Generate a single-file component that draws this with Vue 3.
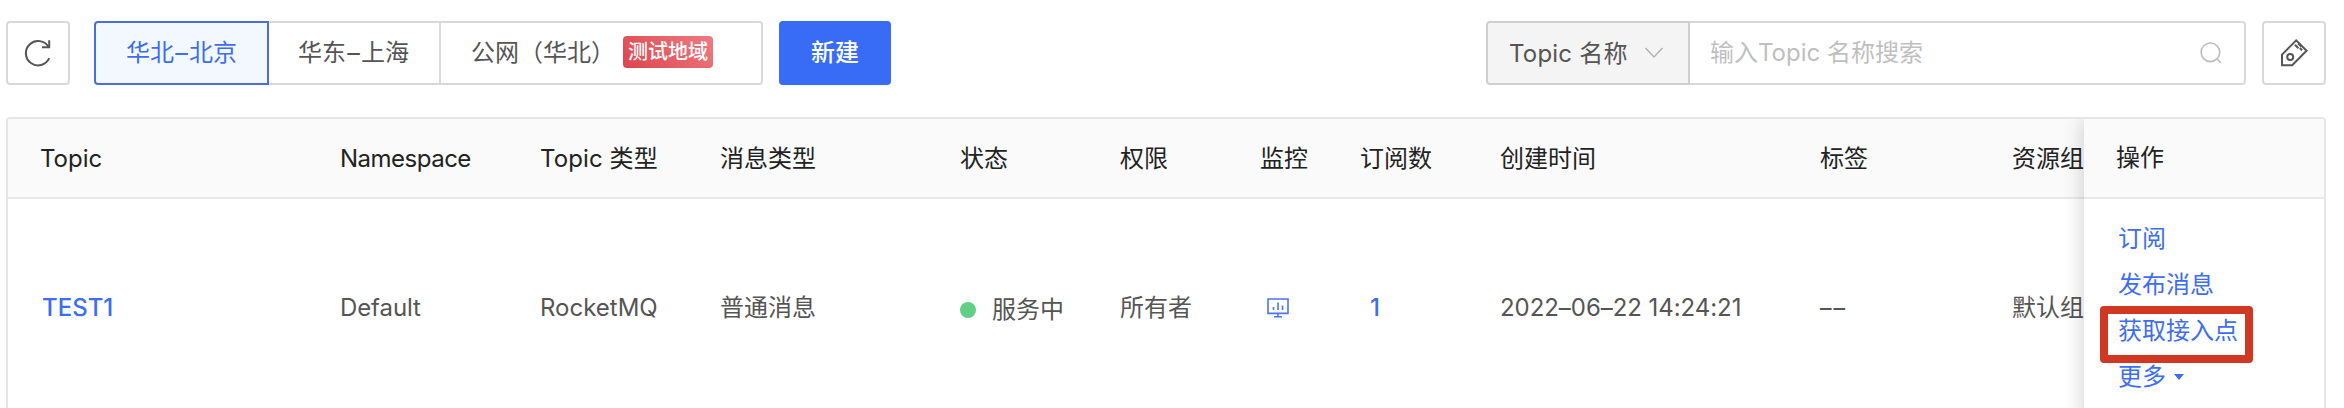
<script setup>
const columns = [
  { key: 'topic', label: 'Topic' },
  { key: 'ns', label: 'Namespace' },
  { key: 'type', label: 'Topic 类型' },
  { key: 'msg', label: '消息类型' },
  { key: 'status', label: '状态' },
  { key: 'perm', label: '权限' },
  { key: 'monitor', label: '监控' },
  { key: 'subs', label: '订阅数' },
  { key: 'created', label: '创建时间' },
  { key: 'tags', label: '标签' },
  { key: 'group', label: '资源组' },
]
</script>

<template>
  <div class="page">
    <div class="toolbar">
      <button class="icon-btn">
        <svg width="28" height="28" viewBox="0 0 28 28" fill="none" stroke="#555" stroke-width="2">
          <path d="M25.2 19.2A12.2 12.2 0 1 1 24.6 8" />
          <path d="M25.2 1.2V8.2H18" />
        </svg>
      </button>
      <div class="regions">
        <div class="region active">华北<span class="wide-dash">–</span>北京</div>
        <div class="region east">华东<span class="wide-dash">–</span>上海</div>
        <div class="region public">公网（华北）<span class="tag">测试地域</span></div>
      </div>
      <button class="create">新建</button>
      <div class="search">
        <div class="select">
          <span class="sel-text">Topic 名称</span>
          <svg width="20" height="12" viewBox="0 0 20 12" fill="none" stroke="#b2b2b2" stroke-width="1.5"><path d="M1.5 1L10 10L18.5 1" /></svg>
        </div>
        <div class="input">
          <span>输入Topic 名称搜索</span>
          <svg width="22" height="22" viewBox="0 0 22 22" fill="none" stroke="#bdbdbd" stroke-width="1.6">
            <circle cx="10.4" cy="10.3" r="9.3" /><path d="M16.8 16.8L20.8 20.8" />
          </svg>
        </div>
      </div>
      <button class="icon-btn">
        <svg width="28" height="28" viewBox="0 0 28 28" fill="none" stroke="#555" stroke-width="2">
          <path d="M2 26.2V15.6L16.2 1.4L26.6 11.8L12.2 26.2Z" />
          <circle cx="10.2" cy="18" r="3" />
          <path d="M15 5.8L18.4 9.2M18.2 4.4L21.4 7.4M19.8 9L22 11.2" />
        </svg>
      </button>
    </div>

    <div class="table">
      <div class="scroll">
        <div class="row head">
          <div v-for="c in columns" :key="c.key" class="cell"><span :class="'h-' + c.key">{{ c.label }}</span></div>
        </div>
        <div class="row body">
          <div class="cell"><span class="link name">TEST1</span></div>
          <div class="cell"><span class="ns">Default</span></div>
          <div class="cell">RocketMQ</div>
          <div class="cell">普通消息</div>
          <div class="cell status"><i class="dot"></i>服务中</div>
          <div class="cell">所有者</div>
          <div class="cell monitor">
            <svg width="22" height="20" viewBox="0 0 22 20" fill="none" stroke="#4a76e8" stroke-width="1.6">
              <path d="M1 1H21V15.4H1ZM11 15.4V18.6M7 18.8H15M6.5 12V9M11 12V4.5M15.5 12V7.5" />
            </svg>
          </div>
          <div class="cell subs"><span class="link count">1</span></div>
          <div class="cell"><span class="time">2022–06–22 14:24:21</span></div>
          <div class="cell"><span class="dash">––</span></div>
          <div class="cell">默认组</div>
        </div>
      </div>
      <div class="fixed">
        <div class="fixed-head">操作</div>
        <div class="actions">
          <a>订阅</a>
          <a>发布消息</a>
          <a class="marked">获取接入点</a>
          <a class="more">更多<i class="caret"></i></a>
        </div>
      </div>
    </div>
  </div>
</template>

<style>
body { background: #fff; overflow: hidden; }
</style>

<style scoped>
* { box-sizing: border-box; }
.page {
  width: 2344px; height: 408px; overflow: hidden; padding: 21px 18px 0 6px;
  font-family: Inter, "Noto Sans CJK SC", sans-serif;
  font-size: 24px; line-height: 36px; color: #555; background: #fff;
}
.toolbar { display: flex; height: 64px; }
button { font: inherit; padding: 0; }
.icon-btn {
  width: 64px; height: 64px; border: 2px solid #d9d9d9; border-radius: 4px; background: #fff;
  display: flex; align-items: center; justify-content: center;
}
.regions { display: flex; margin-left: 24px; }
.region {
  height: 64px; border: 2px solid #d9d9d9; border-left: 0; display: flex; align-items: center;
  white-space: nowrap;
}
.region.active {
  width: 175px; border: 2px solid #4a70d8; background: #f3f8ff; color: #3d6df2;
  border-radius: 4px 0 0 4px; justify-content: center;
}
.wide-dash { display: inline-block; width: 15px; text-align: center; transform: scaleX(1.05); }
.east { width: 172px; padding-left: 29px; }
.public { width: 322px; padding-left: 30px; border-radius: 0 4px 4px 0; }
.tag {
  width: 90px; height: 32px; margin: -2px 0 0 8px; border-radius: 4px; color: #fff; font-size: 20px;
  line-height: 33px; text-align: center; font-weight: 500;
  background: linear-gradient(45deg, #dd444c, #ee7b82);
}
.create {
  width: 112px; height: 64px; margin-left: 16px; border: 0; border-radius: 4px;
  background: #386bf6; color: #fff; font-weight: 500;
}
.search { display: flex; width: 760px; margin-left: auto; margin-right: 16px; }
.select {
  width: 204px; border: 2px solid #cfcfcf; border-radius: 4px 0 0 4px; background: #f4f4f4;
  display: flex; align-items: center; padding-left: 21px;
}
.sel-text { width: 135px; white-space: nowrap; padding-top: 2px; letter-spacing: .2px; }
.input {
  flex: 1; border: 2px solid #d9d9d9; border-left: 0; border-radius: 0 4px 4px 0; color: #bfbfbf;
  display: flex; align-items: center; justify-content: space-between; padding: 0 22px 0 20px;
}
.table {
  margin-top: 32px; height: 310px; width: 2320px; border: 2px solid #e6e6e6; border-bottom: 0;
  border-radius: 4px 4px 0 0; display: flex; overflow: hidden;
}
.scroll { width: 2076px; overflow: hidden; }
.row { display: grid; grid-template-columns: 300px 200px 180px 240px 160px 140px 100px 140px 320px 192px 104px; }
.head { height: 80px; background: #fafafa; border-bottom: 2px solid #e9e9e9; color: #222; }
.body { height: 218px; }
.cell { padding-left: 32px; display: flex; align-items: center; white-space: nowrap; }
.head .cell { padding-top: 1px; }
.h-ns { letter-spacing: -.5px; }
.h-type { letter-spacing: .1px; }
.ns { letter-spacing: -.1px; }
.time { letter-spacing: -.05px; }
.dash { letter-spacing: 2px; font-size: 23px; }
.link { color: #3d6df2; }
.status { padding-top: 3px; }
.dot { width: 16px; height: 16px; border-radius: 50%; background: #60d085; margin-right: 16px; }
.monitor { padding-left: 39px; }
.subs { padding-left: 42px; }
.name { padding-left: 2px; font-weight: 500; }
.count { font-weight: 500; }
.fixed { width: 240px; background: #fff; box-shadow: 0 0 20px rgba(0, 0, 0, .2); clip-path: inset(0 0 0 -30px); }
.fixed-head {
  height: 80px; background: #fafafa; border-bottom: 2px solid #e9e9e9; color: #222;
  padding: 21px 0 0 32px;
}
.actions { display: flex; flex-direction: column; align-items: flex-start; padding: 17px 0 0 34px; color: #3d6df2; }
.actions a { height: 46px; line-height: 46px; position: relative; }
.marked::after {
  content: ""; box-sizing: border-box; position: absolute; left: -18px; top: -2px; width: 153px; height: 57px;
  border: 8px solid #d03824; border-radius: 4px;
}
.more { display: flex; align-items: center; }
.caret { margin-left: 8px; border: 5px solid transparent; border-top: 6px solid #3d6df2; border-bottom: 0; }
</style>
